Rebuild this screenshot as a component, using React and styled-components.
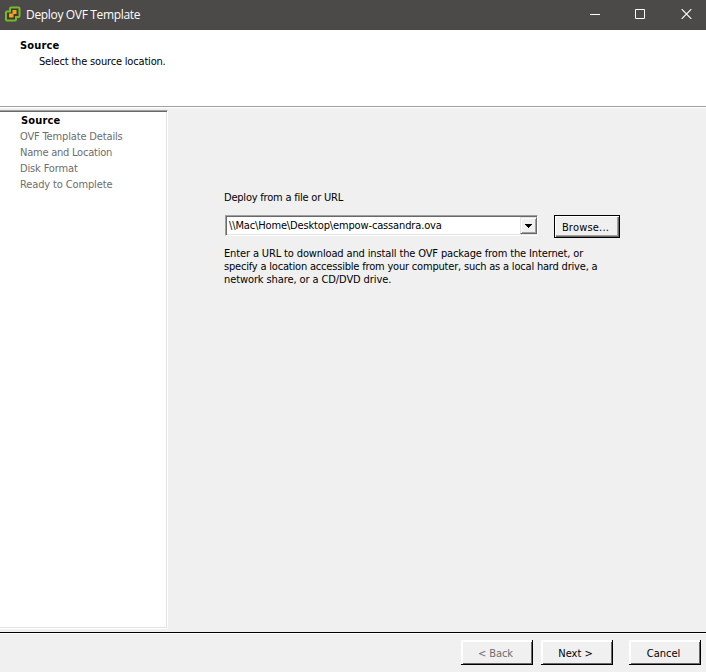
import React from 'react';
import styled, { createGlobalStyle } from 'styled-components';

const GlobalStyle = createGlobalStyle`
  * { box-sizing: border-box; }
  body { margin: 0; overflow: hidden; }
`;

const Window = styled.div`
  display: flex;
  flex-direction: column;
  width: 706px;
  height: 672px;
  background: #f0f0f0;
  color: #000;
  font: 11px/13px "DejaVu Sans Condensed", "DejaVu Sans", sans-serif;
  white-space: nowrap;
  cursor: default;
`;

const TitleBar = styled.header`
  display: flex;
  align-items: center;
  height: 30px;
  padding-left: 4px;
  background: #4c4a48;
  color: #fff;
`;

const Title = styled.h1`
  flex: 1;
  margin: 0 0 0 4px;
  font: 400 12px/16px "Open Sans", "Noto Sans", sans-serif;
  letter-spacing: -0.33px;
`;

const WindowControl = styled.div`
  display: flex;
  align-items: center;
  justify-content: center;
  width: ${p => p.$width}px;
  height: 30px;
  padding-bottom: 2px;
  svg { display: block; }
`;

const Heading = styled.section`
  height: 78px;
  padding: 8px 0 0 20px;
  background: #fff;
  border-bottom: 1px solid #fff;
  box-shadow: inset 0 -1px 0 #a0a0a0;
`;

const Bold = styled.div`
  font-weight: 700;
  line-height: 16px;
  letter-spacing: 0.15px;
  color: #000;
`;

const Text = styled.span`
  letter-spacing: ${p => p.$track || 0}px;
`;

const Subtitle = styled.div`
  padding-left: 19px;
  line-height: 16px;
`;

const Body = styled.main`
  display: flex;
  height: 524px;
  padding-top: 2px;
`;

const Steps = styled.nav`
  width: 168px;
  height: 519px;
  padding-left: 20px;
  background: #fff;
  border-top: 1px solid #a0a0a0;
  border-right: 1px solid #fff;
  border-bottom: 1px solid #fff;
  box-shadow: inset 0 1px 0 #696969, inset -1px -1px 0 #e3e3e3;
`;

const Step = styled.div`
  line-height: 16px;
  color: #6d6d6d;
`;

const StepTitle = styled(Bold)`
  margin-top: 2px;
  padding-left: 1px;
`;

const Content = styled.section`
  padding: 81px 0 0 56px;
`;

const SourceRow = styled.div`
  display: flex;
  align-items: flex-start;
  margin: 11px 0 9px 1px;
`;

const ComboBox = styled.div`
  display: flex;
  width: 313px;
  height: 21px;
  padding: 1px 0 1px 1px;
  background: #fff;
  border: 1px solid;
  border-color: #a0a0a0 #fff #fff #a0a0a0;
  box-shadow: inset 1px 1px 0 #696969, inset 0 -1px 0 #e3e3e3;
`;

const ComboValue = styled.div`
  flex: 1;
  padding-left: 2px;
  line-height: 17px;
`;

const DropButton = styled.div`
  display: flex;
  justify-content: center;
  width: 17px;
  height: 17px;
  padding: 6px 0 0;
  background: #f0f0f0;
  border: 1px solid;
  border-color: #e3e3e3 #696969 #696969 #e3e3e3;
  box-shadow: inset 1px 1px 0 #fff, inset -1px -1px 0 #a0a0a0;
  svg { display: block; }
`;

const Button = styled.button`
  display: flex;
  align-items: center;
  justify-content: center;
  width: 72px;
  height: 25px;
  margin: 0;
  padding: 2px 3px 0 0;
  background: #f0f0f0;
  border: 0;
  color: ${p => (p.disabled ? '#6d6d6d' : '#000')};
  font: inherit;
  box-shadow: inset -1px -1px 0 #000, inset 2px 2px 0 #fff, inset -2px -2px 0 #696969;
`;

const BrowseButton = styled(Button)`
  width: 66px;
  height: 23px;
  margin-left: 16px;
  border: 1px solid #000;
  box-shadow: inset 1px 1px 0 #fff, inset -1px -1px 0 #696969, inset -2px -2px 0 #a0a0a0;
`;

const HelpLine = styled.div`
  height: 13px;
`;

const Footer = styled.footer`
  display: flex;
  justify-content: flex-end;
  height: 40px;
  padding: 7px 5px 0 0;
  border-top: 1px solid #000;
  box-shadow: inset 0 1px 0 #fff;
`;

const ButtonPair = styled.div`
  display: flex;
  gap: 8px;
  margin-right: 16px;
`;

const AppIcon = () => (
  <svg width="18" height="18" viewBox="0 0 18 18">
    <path
      d="M7 1.5H14.5Q15.5 1.5 15.5 2.5V10Q15.5 11 14.5 11H12V13.5Q12 14.5 11 14.5H3Q2 14.5 2 13.5V6.5Q2 5.5 3 5.5H6V2.5Q6 1.5 7 1.5Z"
      fill="#3d3a35"
      stroke="#78b928"
      strokeWidth="2"
    />
    <path d="M8.5 4H12.5V8H9.5V11.5H5V7.5H8.5Z" fill="#f6a21c" />
  </svg>
);

const steps = [
  ['OVF Template Details', -0.15],
  ['Name and Location', -0.23],
  ['Disk Format', -0.14],
  ['Ready to Complete', -0.13],
];

const help = [
  ['Enter a URL to download and install the OVF package from the Internet, or', -0.135],
  ['specify a location accessible from your computer, such as a local hard drive, a', -0.192],
  ['network share, or a CD/DVD drive.', -0.1],
];

export default function App() {
  return (
    <Window>
      <GlobalStyle />
      <TitleBar>
        <AppIcon />
        <Title>Deploy OVF Template</Title>
        <WindowControl $width={36}>
          <svg width="10" height="10"><path d="M0 5.5H10" stroke="#fff" /></svg>
        </WindowControl>
        <WindowControl $width={54}>
          <svg width="10" height="10"><path d="M.5 .5H9.5V9.5H.5Z" fill="none" stroke="#fff" /></svg>
        </WindowControl>
        <WindowControl $width={39}>
          <svg width="11" height="10"><path d="M.7 .2L10.3 9.8M10.3 .2L.7 9.8" stroke="#fff" strokeWidth="1.2" /></svg>
        </WindowControl>
      </TitleBar>
      <Heading>
        <Bold>Source</Bold>
        <Subtitle><Text $track={-0.18}>Select the source location.</Text></Subtitle>
      </Heading>
      <Body>
        <Steps>
          <StepTitle>Source</StepTitle>
          {steps.map(([label, track]) => (
            <Step key={label}><Text $track={track}>{label}</Text></Step>
          ))}
        </Steps>
        <Content>
          <Text $track={-0.21}>Deploy from a file or URL</Text>
          <SourceRow>
            <ComboBox>
              <ComboValue><Text $track={-0.145}>{'\\\\Mac\\Home\\Desktop\\empow-cassandra.ova'}</Text></ComboValue>
              <DropButton>
                <svg width="7" height="4" shapeRendering="crispEdges"><path d="M0 0H7V1H6V2H5V3H4V4H3V3H2V2H1V1H0Z" /></svg>
              </DropButton>
            </ComboBox>
            <BrowseButton><Text $track={0.2}>Browse...</Text></BrowseButton>
          </SourceRow>
          {help.map(([line, track]) => (
            <HelpLine key={line}><Text $track={track}>{line}</Text></HelpLine>
          ))}
        </Content>
      </Body>
      <Footer>
        <ButtonPair>
          <Button disabled><Text $track={-0.1}>&lt; Back</Text></Button>
          <Button><Text>Next &gt;</Text></Button>
        </ButtonPair>
        <Button><Text>Cancel</Text></Button>
      </Footer>
    </Window>
  );
}
